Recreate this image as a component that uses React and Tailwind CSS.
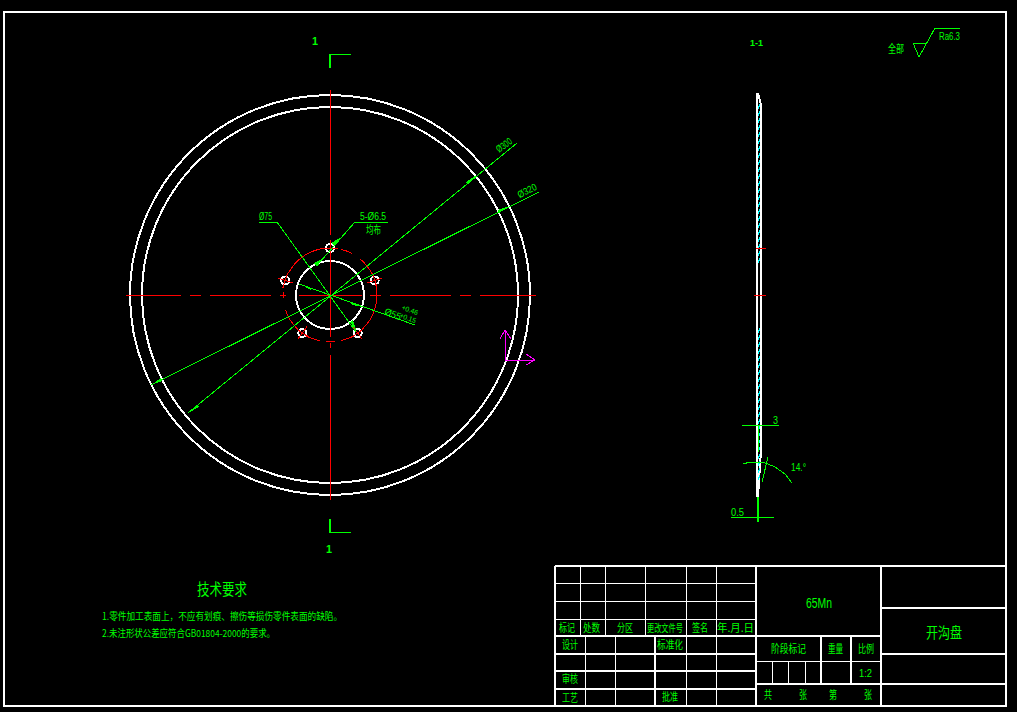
const CX = 330;
const CY = 295;
const FONT = '"Noto Sans CJK SC", "Liberation Sans", sans-serif';
const LATIN = '"Liberation Sans", "Noto Sans CJK SC", sans-serif';

function T({ x1, x2, cy, h, children, rotate, latin, bold }) {
  const w = x2 - x1;
  const size = latin ? h * 1.4 : h * 1.08;
  const y = latin ? cy + h / 2 : cy + size * 0.38;
  return (
    <text
      x={x1}
      y={y}
      textLength={w}
      lengthAdjust="spacingAndGlyphs"
      fontSize={size}
      fontFamily={latin ? LATIN : FONT}
      className={bold ? "fill-[#00ff00] font-bold" : "fill-[#00ff00]"}
      transform={rotate ? `rotate(${rotate} ${x1} ${cy})` : undefined}
    >
      {children}
    </text>
  );
}

function L({ d, c = "stroke-[#00ff00]", w = 1 }) {
  return (
    <path
      d={d.map(([a, b, e, f]) => `M${a} ${b}L${e} ${f}`).join("")}
      className={c}
      strokeWidth={w}
      fill="none"
    />
  );
}

function arc(a0, a1, r = 47) {
  const p = (a) => [CX + r * Math.cos((a * Math.PI) / 180), CY + r * Math.sin((a * Math.PI) / 180)];
  const [x0, y0] = p(a0);
  const [x1, y1] = p(a1);
  return `M${x0} ${y0}A${r} ${r} 0 ${a1 - a0 > 180 ? 1 : 0} 1 ${x1} ${y1}`;
}

const holes = [-90, -18, 54, 126, 198];
const redArcs = [
  [-152, -95], [-76, -62], [-51, -25], [-12, 46], [60, 76], [84, 95], [102, 123], [133, 161], [176, 184],
];

function hatch(y0, y1) {
  const out = [];
  for (let y = y0; y < y1; y += 7) {
    out.push([758, y + 5, 760, y]);
  }
  return out;
}

const thin = [
  [580, 566, 580, 636], [605, 566, 605, 636], [645, 566, 645, 636], [686, 566, 686, 636], [716, 566, 716, 636],
  [555, 583, 756, 583], [555, 601, 756, 601], [555, 619, 756, 619],
  [585, 636, 585, 706], [615, 636, 615, 706], [686, 636, 686, 706], [716, 636, 716, 706],
  [772, 661, 772, 684], [788, 661, 788, 684], [805, 661, 805, 684], [756, 661, 881, 661],
];
const thick = [
  [555, 566, 555, 706], [555, 566, 1006, 566], [555, 636, 881, 636], [555, 654, 756, 654], [555, 671, 756, 671],
  [555, 689, 756, 689], [655, 636, 655, 706], [756, 566, 756, 706], [821, 636, 821, 684], [851, 636, 851, 684],
  [756, 684, 1006, 684], [881, 566, 881, 706], [881, 608, 1006, 608], [881, 654, 1006, 654],
];

export default function App() {
  return (
    <div className="w-[1017px] h-[712px] overflow-hidden bg-black">
      <svg width="1017" height="712" viewBox="0 0 1017 712" shapeRendering="crispEdges" className="block bg-black">
        <rect x="4" y="12" width="1002" height="694" fill="none" strokeWidth="2" className="stroke-white" />

        {/* front view */}
        <g fill="none" strokeWidth="2" className="stroke-white">
          <circle cx={CX} cy={CY} r="200" />
          <circle cx={CX} cy={CY} r="188" />
          <circle cx={CX} cy={CY} r="34" />
          {holes.map((a) => (
            <circle
              key={a}
              cx={CX + 47 * Math.cos((a * Math.PI) / 180)}
              cy={CY + 47 * Math.sin((a * Math.PI) / 180)}
              r="4"
            />
          ))}
        </g>

        <L
          c="stroke-[#ff0000]"
          d={[
            [126, 295, 181, 295], [190, 295, 201, 295], [210, 295, 271, 295], [280, 295, 286, 295],
            [299, 295, 362, 295], [370, 295, 381, 295], [390, 295, 451, 295], [460, 295, 471, 295], [480, 295, 536, 295],
          ]}
        />
        <L c="stroke-[#ff0000]" d={[[330, 90, 330, 235], [330, 253, 330, 337], [330, 343, 330, 348], [330, 355, 330, 500]]} />
        <g fill="none" strokeWidth="1" className="stroke-[#ff0000]">
          {redArcs.map(([a, b]) => (
            <path key={a} d={arc(a, b)} />
          ))}
          {holes.map((a) => {
            const r = (a * Math.PI) / 180;
            const x = CX + 47 * Math.cos(r);
            const y = CY + 47 * Math.sin(r);
            const dx = Math.cos(r) * 8;
            const dy = Math.sin(r) * 8;
            return <path key={a} d={`M${x - dx} ${y - dy}L${x + dx} ${y + dy}M${x + dy} ${y - dx}L${x - dy} ${y + dx}`} />;
          })}
        </g>

        {/* section marks */}
        <L w={2} d={[[330, 54, 330, 68], [330, 519, 330, 533]]} />
        <L d={[[330, 54, 351, 54], [330, 532, 351, 532]]} />
        <T latin bold x1={312} x2={318} cy={41} h={8}>1</T>
        <T latin bold x1={326} x2={332} cy={549} h={8}>1</T>

        {/* dimension lines */}
        <L
          d={[
            [151, 385, 539, 192],
            [188, 413, 517, 143],
            [259, 222, 277, 222],
            [277, 222, 356, 332],
            [355, 222, 320, 262],
            [355, 222, 388, 222],
            [299, 284, 415, 325],
          ]}
        />
        <g className="fill-[#00ff00]">
          <polygon points="151,385 161,378 162,381" />
          <polygon points="509,206 498,210 499,213" />
          <polygon points="188,413 197,404 199,407" />
          <polygon points="475,176 466,182 468,185" />
          <polygon points="340,238 335,246 331,243" />
          <polygon points="322,259 317,267 314,263" />
          <polygon points="302,285 312,288 311,290" />
          <polygon points="362,307 351,302 352,305" />
          <polygon points="357,332 350,322 353,320" />
        </g>
        <T latin x1={259} x2={272} cy={216} h={8}>Ø75</T>
        <T latin x1={360} x2={386} cy={216} h={8}>5-Ø6.5</T>
        <T x1={366} x2={381} cy={230} h={10}>均布</T>
        <T latin x1={497} x2={514} cy={150} h={7} rotate={-36}>Ø300</T>
        <T latin x1={518} x2={538} cy={195} h={7} rotate={-26}>Ø320</T>
        <T latin x1={385} x2={402} cy={311} h={7} rotate={20}>Ø55</T>
        <T latin x1={402} x2={419} cy={307} h={5} rotate={20}>+0.46</T>
        <T latin x1={400} x2={417} cy={315} h={5} rotate={20}>+0.15</T>

        {/* UCS icon */}
        <L
          c="stroke-[#ff00ff]"
          d={[
            [505, 330, 505, 360], [505, 360, 535, 360], [505, 330, 500, 339], [505, 330, 511, 339],
            [535, 360, 526, 354], [535, 360, 526, 365],
          ]}
        />

        {/* section view */}
        <L c="stroke-white" w={2} d={[[757, 93, 757, 497]]} />
        <L c="stroke-white" w={2} d={[[761, 105, 761, 450], [758, 93, 761, 105], [761, 450, 758, 497]]} />
        <L c="stroke-[#00ffff]" d={[...hatch(104, 260), ...hatch(328, 480)]} />
        <L c="stroke-[#ff0000]" d={[[756, 248, 766, 248], [754, 295, 766, 295]]} />
        <L
          d={[
            [742, 425, 779, 425], [758, 425, 758, 452], [768, 457, 762, 482], [731, 517, 774, 517],
          ]}
        />
        <L w={2} d={[[758, 497, 758, 522]]} />
        <path
          d="M743 464L750 462L763 462L775 467L785 474L792 483"
          fill="none"
          strokeWidth="1"
          className="stroke-[#00ff00]"
        />
        <T latin x1={773} x2={778} cy={420} h={8}>3</T>
        <T latin x1={791} x2={806} cy={467} h={8}>14.°</T>
        <T latin x1={731} x2={744} cy={512} h={8}>0.5</T>
        <T latin bold x1={750} x2={763} cy={42} h={7}>1-1</T>

        {/* roughness */}
        <path d="M913 43L927 43M913 43L919 57L935 28L960 28" fill="none" strokeWidth="1" className="stroke-[#00ff00]" />
        <T x1={888} x2={904} cy={49} h={10}>全部</T>
        <T latin x1={939} x2={960} cy={36} h={8}>Ra6.3</T>

        {/* requirements */}
        <T x1={197} x2={247} cy={589} h={15}>技术要求</T>
        <T x1={102} x2={342} cy={616} h={9}>1.零件加工表面上，不应有划痕、擦伤等损伤零件表面的缺陷。</T>
        <T x1={102} x2={275} cy={633} h={9}>2.未注形状公差应符合GB01804-2000的要求。</T>

        {/* title block */}
        <L c="stroke-white" d={thin} />
        <L c="stroke-white" w={2} d={thick} />
        <T x1={559} x2={575} cy={628} h={10}>标记</T>
        <T x1={583} x2={600} cy={628} h={10}>处数</T>
        <T x1={617} x2={633} cy={628} h={10}>分区</T>
        <text
          fontSize="10.8"
          fontFamily={FONT}
          className="fill-[#00ff00]"
          transform="translate(647 632) scale(0.667 1)"
        >
          更改文件号
        </text>
        <T x1={692} x2={708} cy={628} h={10}>签名</T>
        <T x1={717} x2={754} cy={628} h={10}>年.月.日</T>
        <T x1={562} x2={578} cy={645} h={10}>设计</T>
        <T x1={657} x2={683} cy={645} h={10}>标准化</T>
        <T x1={562} x2={578} cy={679} h={10}>审核</T>
        <T x1={562} x2={578} cy={698} h={10}>工艺</T>
        <T x1={662} x2={678} cy={697} h={10}>批准</T>
        <T latin x1={806} x2={832} cy={602} h={11}>65Mn</T>
        <T x1={926} x2={962} cy={632} h={14}>开沟盘</T>
        <T x1={771} x2={806} cy={649} h={10}>阶段标记</T>
        <T x1={828} x2={843} cy={649} h={10}>重量</T>
        <T x1={858} x2={874} cy={649} h={10}>比例</T>
        <T latin x1={859} x2={872} cy={673} h={8}>1:2</T>
        <T x1={764} x2={772} cy={695} h={10}>共</T>
        <T x1={799} x2={807} cy={695} h={10}>张</T>
        <T x1={829} x2={837} cy={695} h={10}>第</T>
        <T x1={864} x2={872} cy={695} h={10}>张</T>
      </svg>
    </div>
  );
}
